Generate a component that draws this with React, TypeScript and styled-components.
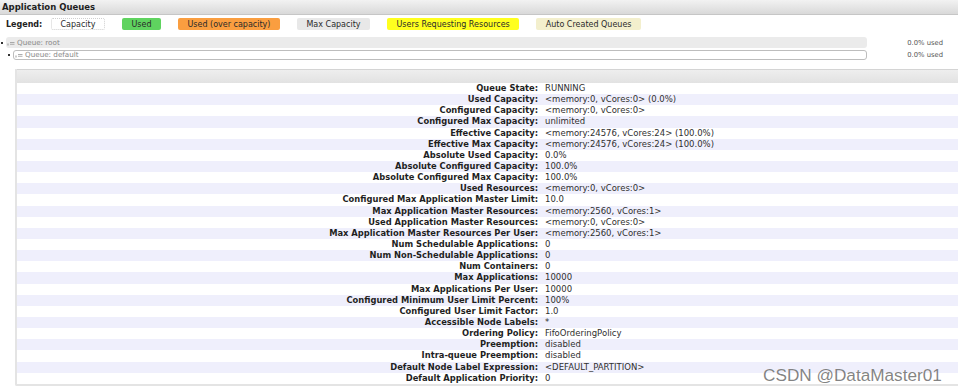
import styled, { createGlobalStyle } from 'styled-components';

const GlobalStyle = createGlobalStyle`
  html, body {
    margin: 0;
    padding: 0;
    background: #fff;
  }
  body {
    font-family: "DejaVu Sans", Verdana, sans-serif;
    color: #222;
  }
`;

const Page = styled.div`
  position: relative;
  width: 958px;
  height: 392px;
  overflow: hidden;
`;

const TitleBar = styled.div`
  height: 14px;
  padding-left: 2px;
  background: linear-gradient(#f2f2f2, #d9d9d9);
  border-bottom: 1px solid #c6c6c6;
  font-size: 8.5px;
  font-weight: bold;
  line-height: 14px;
  color: #1e1e1e;
`;

const Legend = styled.div`
  display: flex;
  align-items: center;
  gap: 17px;
  height: 14px;
  margin-top: 2px;
  padding-left: 6px;
  font-size: 8px;
`;

const LegendLabel = styled.span`
  font-weight: bold;
  margin-right: -17px;
  width: 45px;
`;

type Tone = 'capacity' | 'used' | 'over' | 'max' | 'users' | 'auto';

const tones: Record<Tone, string> = {
  capacity: '#ffffff',
  used: '#5fd35f',
  over: '#fa9e40',
  max: '#e8e8e8',
  users: '#ffff1f',
  auto: '#f3efcd',
};

const LegendItem = styled.span<{ $tone: Tone }>`
  height: 12px;
  line-height: 12px;
  padding: 0 8.5px;
  border-radius: 2px;
  background: ${({ $tone }) => tones[$tone]};
  border: ${({ $tone }) => ($tone === 'capacity' ? '1px dotted #cfcfcf' : '1px solid transparent')};
  color: #2a2a2a;
  box-sizing: border-box;
`;

const Tree = styled.div`
  margin-top: 6px;
  display: flex;
  flex-direction: column;
  gap: 1px;
`;

const QueueRow = styled.div<{ $depth: number }>`
  display: flex;
  align-items: center;
  height: 11px;
  padding-left: ${({ $depth }) => ($depth === 0 ? 1 : 8)}px;
`;

const Dot = styled.span`
  width: 2px;
  height: 2px;
  background: #333;
  margin-right: 3px;
`;

const QueueBar = styled.div<{ $open: boolean }>`
  box-sizing: border-box;
  height: ${({ $open }) => ($open ? 11 : 10)}px;
  width: ${({ $open }) => ($open ? 861 : 854)}px;
  margin-right: ${({ $open }) => ($open ? 1 : 0)}px;
  border-radius: 3px;
  background: ${({ $open }) => ($open ? '#ebebeb' : '#fff')};
  border: ${({ $open }) => ($open ? 'none' : '1px solid #bdbdbd')};
  display: flex;
  align-items: center;
  gap: 2px;
  padding-left: 1px;
  font-size: 7.2px;
  color: #888;
`;

const Stats = styled.span`
  margin-left: auto;
  margin-right: 15px;
  font-size: 6.8px;
  color: #555;
`;

const Table = styled.div`
  margin: 9px 0 0 15px;
  border-left: 2px solid #e4e4e4;
  border-bottom: 2px solid #e4e4e4;
  border-radius: 0 0 0 2px;
`;

const HeadRow = styled.div`
  height: 13px;
  border-top: 1px solid #d4d4d4;
  background: linear-gradient(#eeeeee, #e2e2e2);
`;

const Row = styled.div<{ $odd: boolean }>`
  display: grid;
  grid-template-columns: 521px 1fr;
  column-gap: 7px;
  height: 11.15px;
  line-height: 11.15px;
  background: ${({ $odd }) => ($odd ? '#efeffc' : '#fff')};
  white-space: nowrap;
`;

const Label = styled.span`
  text-align: right;
  font-size: 8.35px;
  font-weight: bold;
  color: #1f1f1f;
`;

const Value = styled.span`
  font-size: 8.5px;
  color: #2f2f2f;
`;

const Watermark = styled.div`
  position: absolute;
  left: 763px;
  top: 365px;
  font-family: "Liberation Sans", Arial, sans-serif;
  font-size: 17.2px;
  color: rgba(90, 90, 90, 0.75);
  text-shadow: 0 0 1px #fff;
`;

function QueueIcon() {
  return (
    <svg width="8" height="6" viewBox="0 0 8 6">
      <rect x="0.5" y="3.5" width="1" height="2" fill="#999" />
      <rect x="3" y="2" width="4.5" height="0.8" fill="#999" />
      <rect x="3" y="3.8" width="4.5" height="0.8" fill="#999" />
    </svg>
  );
}

const rows: [string, string][] = [
  ['Queue State:', 'RUNNING'],
  ['Used Capacity:', '<memory:0, vCores:0> (0.0%)'],
  ['Configured Capacity:', '<memory:0, vCores:0>'],
  ['Configured Max Capacity:', 'unlimited'],
  ['Effective Capacity:', '<memory:24576, vCores:24> (100.0%)'],
  ['Effective Max Capacity:', '<memory:24576, vCores:24> (100.0%)'],
  ['Absolute Used Capacity:', '0.0%'],
  ['Absolute Configured Capacity:', '100.0%'],
  ['Absolute Configured Max Capacity:', '100.0%'],
  ['Used Resources:', '<memory:0, vCores:0>'],
  ['Configured Max Application Master Limit:', '10.0'],
  ['Max Application Master Resources:', '<memory:2560, vCores:1>'],
  ['Used Application Master Resources:', '<memory:0, vCores:0>'],
  ['Max Application Master Resources Per User:', '<memory:2560, vCores:1>'],
  ['Num Schedulable Applications:', '0'],
  ['Num Non-Schedulable Applications:', '0'],
  ['Num Containers:', '0'],
  ['Max Applications:', '10000'],
  ['Max Applications Per User:', '10000'],
  ['Configured Minimum User Limit Percent:', '100%'],
  ['Configured User Limit Factor:', '1.0'],
  ['Accessible Node Labels:', '*'],
  ['Ordering Policy:', 'FifoOrderingPolicy'],
  ['Preemption:', 'disabled'],
  ['Intra-queue Preemption:', 'disabled'],
  ['Default Node Label Expression:', '<DEFAULT_PARTITION>'],
  ['Default Application Priority:', '0'],
];

export default function App() {
  return (
    <Page>
      <GlobalStyle />
      <TitleBar>Application Queues</TitleBar>
      <Legend>
        <LegendLabel>Legend:</LegendLabel>
        <LegendItem $tone="capacity">Capacity</LegendItem>
        <LegendItem $tone="used">Used</LegendItem>
        <LegendItem $tone="over">Used (over capacity)</LegendItem>
        <LegendItem $tone="max">Max Capacity</LegendItem>
        <LegendItem $tone="users">Users Requesting Resources</LegendItem>
        <LegendItem $tone="auto">Auto Created Queues</LegendItem>
      </Legend>
      <Tree>
        <QueueRow $depth={0}>
          <Dot />
          <QueueBar $open>
            <QueueIcon />
            Queue: root
          </QueueBar>
          <Stats>0.0% used</Stats>
        </QueueRow>
        <QueueRow $depth={1}>
          <Dot />
          <QueueBar $open={false}>
            <QueueIcon />
            Queue: default
          </QueueBar>
          <Stats>0.0% used</Stats>
        </QueueRow>
      </Tree>
      <Table>
        <HeadRow />
        {rows.map(([label, value], i) => (
          <Row key={label} $odd={i % 2 === 1}>
            <Label>{label}</Label>
            <Value>{value}</Value>
          </Row>
        ))}
      </Table>
      <Watermark>CSDN @DataMaster01</Watermark>
    </Page>
  );
}
